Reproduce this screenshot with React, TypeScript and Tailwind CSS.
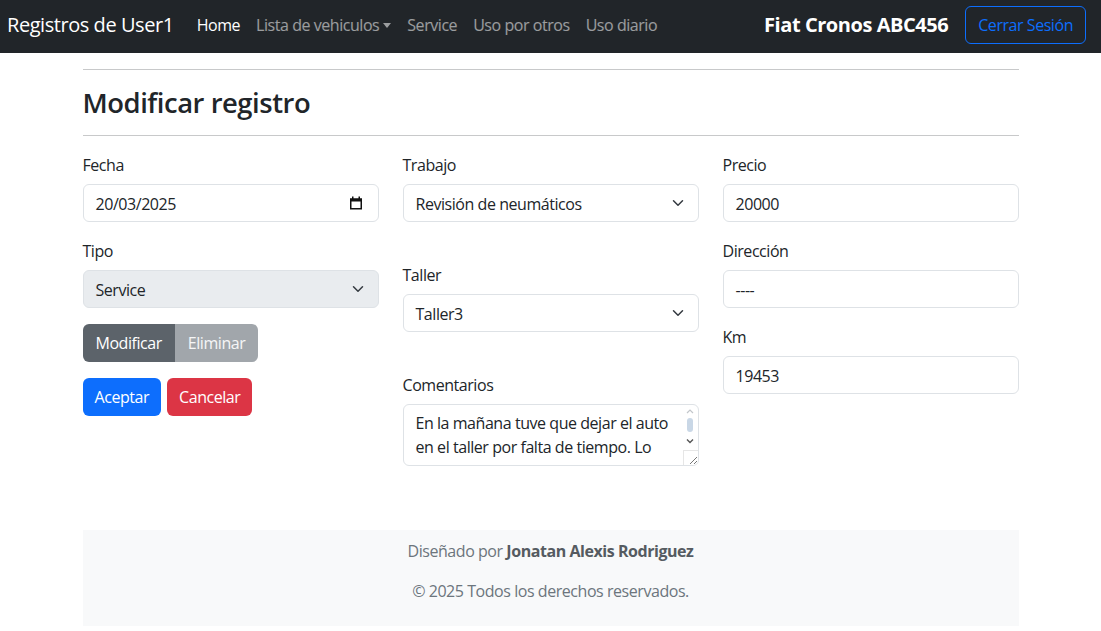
import React from 'react';

// ─── Small drawings ─────────────────────────────────────────────────────────

function Chevron() {
  return (
    <svg width="16" height="12" viewBox="0 0 16 16" className="shrink-0">
      <path fill="none" stroke="#343a40" strokeLinecap="round" strokeLinejoin="round" strokeWidth="2" d="m2 5 6 6 6-6" />
    </svg>
  );
}

function CalendarIcon() {
  return (
    <svg width="14" height="14" viewBox="0 0 14 14" className="shrink-0">
      <rect x="3" y="0.5" width="1.5" height="2.5" fill="#111" />
      <rect x="9.5" y="0.5" width="1.5" height="2.5" fill="#111" />
      <rect x="1" y="2.5" width="12" height="3" fill="#111" />
      <rect x="1.75" y="3.25" width="10.5" height="9.5" fill="none" stroke="#111" strokeWidth="1.5" />
    </svg>
  );
}

// ─── Form pieces ────────────────────────────────────────────────────────────

function Label({ children }: { children: React.ReactNode }) {
  return <div className="mb-[7px] pt-px leading-6">{children}</div>;
}

function TextField({ value }: { value: string }) {
  return (
    <div className="flex h-[38px] items-center rounded-md border border-[#dee2e6] bg-white px-3 pt-px leading-6">
      {value}
    </div>
  );
}

function SelectField({ value, disabled }: { value: string; disabled?: boolean }) {
  return (
    <div
      className={
        disabled
          ? 'flex h-[38px] items-center justify-between rounded-md border border-[#dee2e6] bg-[#e9ecef] px-3 leading-6'
          : 'flex h-[38px] items-center justify-between rounded-md border border-[#dee2e6] bg-white px-3 leading-6'
      }
    >
      <span className="pt-px">{value}</span>
      <Chevron />
    </div>
  );
}

function Comments() {
  return (
    <div className="relative h-[62px] overflow-hidden rounded-md border border-[#dee2e6] bg-white">
      <div className="py-1.5 pl-3 pr-6 leading-6">
        En la mañana tuve que dejar el auto en el taller por falta de tiempo. Lo
      </div>
      {/* scrollbar */}
      <div className="absolute right-0 top-0 flex h-[46px] w-[15px] flex-col items-center pt-[3px]">
        <svg width="8" height="6" viewBox="0 0 8 6">
          <path d="M1 5 4 2l3 3" fill="none" stroke="#c2c6ca" strokeWidth="1.2" />
        </svg>
        <div className="mt-[4px] h-[14px] w-[6px] rounded-full bg-[#c9d7e6]" />
        <svg width="8" height="6" viewBox="0 0 8 6" className="mt-[6px]">
          <path d="M1 1.5 4 4.5l3-3" fill="none" stroke="#555" strokeWidth="1.4" />
        </svg>
      </div>
      <div className="absolute bottom-0 right-0 h-[15px] w-[15px] border-l border-t border-[#e6e6e6] bg-white">
        <svg width="15" height="15" viewBox="0 0 15 15">
          <path d="M13 6 6 13M13 10l-3 3" stroke="#777" strokeWidth="1" />
        </svg>
      </div>
    </div>
  );
}

// ─── Page ───────────────────────────────────────────────────────────────────

export default function App() {
  const navLinks = ['Service', 'Uso por otros', 'Uso diario'];

  return (
    <div
      className="min-h-[631px] bg-white text-base tracking-[-0.028em] text-[#212529]"
      style={{ fontFamily: '"Open Sans", "Noto Sans", sans-serif' }}
    >
      {/* Navbar */}
      <nav className="flex h-[53px] items-center justify-between bg-[#212529] pb-[3px] pl-[7px] pr-[15px]">
        <div className="flex items-center">
          <span className="mr-[15px] text-xl text-white">Registros de User1</span>
          <span className="px-[8px] text-white">Home</span>
          <span className="flex items-center px-[8px] text-white/55">
            Lista de vehiculos
            <svg width="8" height="5" viewBox="0 0 8 5" className="ml-[4px]">
              <path d="M0 0h8L4 5z" fill="currentColor" />
            </svg>
          </span>
          {navLinks.map((l) => (
            <span key={l} className="px-[8px] text-white/55">
              {l}
            </span>
          ))}
        </div>
        <div className="flex items-center">
          <span className="mr-[17px] text-xl font-bold text-white">Fiat Cronos ABC456</span>
          <span className="flex h-[38px] items-center rounded-md border border-[#0d6efd] px-3 text-[#0d6efd]">Cerrar Sesión</span>
        </div>
      </nav>

      {/* Content */}
      <div className="mx-auto w-[936px]">
        <div className="mt-4 h-px bg-[#c8c9ca]" />
        <h3 className="mt-4 text-[27.4px] font-semibold leading-[33px]">Modificar registro</h3>
        <div className="mt-4 h-px bg-[#c8c9ca]" />

        <div className="mt-4 grid grid-cols-3 gap-x-6">
          {/* Column 1 */}
          <div>
            <Label>Fecha</Label>
            <div className="flex h-[38px] items-center justify-between rounded-md border border-[#dee2e6] bg-white pl-3 pr-[15px] leading-6">
              <span className="pt-px">20/03/2025</span>
              <CalendarIcon />
            </div>
            <div className="mt-4">
              <Label>Tipo</Label>
              <SelectField value="Service" disabled />
            </div>
            <div className="mt-4 flex">
              <span className="flex h-[38px] items-center rounded-l-md bg-[#5c636a] px-[13px] text-white">Modificar</span>
              <span className="flex h-[38px] items-center rounded-r-md bg-[#a1a6ab] px-[13px] text-white/90">Eliminar</span>
            </div>
            <div className="mt-4 flex gap-[6px]">
              <span className="flex h-[38px] items-center rounded-md bg-[#0d6efd] px-3 text-white">Aceptar</span>
              <span className="flex h-[38px] items-center rounded-md bg-[#dc3545] px-3 text-white">Cancelar</span>
            </div>
          </div>

          {/* Column 2 */}
          <div>
            <Label>Trabajo</Label>
            <SelectField value="Revisión de neumáticos" />
            <div className="mt-10">
              <Label>Taller</Label>
              <SelectField value="Taller3" />
            </div>
            <div className="mt-10">
              <Label>Comentarios</Label>
              <Comments />
            </div>
          </div>

          {/* Column 3 */}
          <div>
            <Label>Precio</Label>
            <TextField value="20000" />
            <div className="mt-4">
              <Label>Dirección</Label>
              <TextField value="----" />
            </div>
            <div className="mt-4">
              <Label>Km</Label>
              <TextField value="19453" />
            </div>
          </div>
        </div>

        {/* Footer */}
        <footer className="mt-16 bg-[#f8f9fa] py-2 text-center text-[#6c757d]">
          <p className="mb-[15px] pt-px leading-6">
            Diseñado por <strong className="font-bold text-[#555b61]">Jonatan Alexis Rodriguez</strong>
          </p>
          <p className="mb-[15px] pt-px leading-6">© 2025 Todos los derechos reservados.</p>
        </footer>
      </div>
    </div>
  );
}
